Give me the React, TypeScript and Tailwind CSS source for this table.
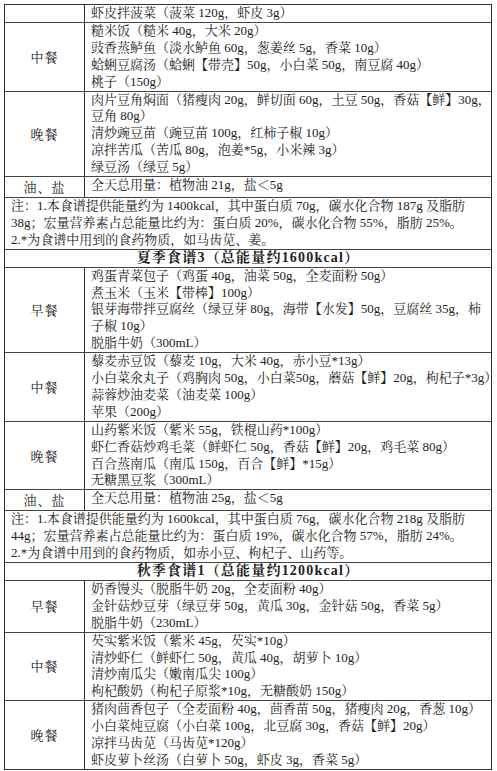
type Row =
  | { kind: 'meal'; label: string; lines: string[] }
  | { kind: 'note'; lines: string[] }
  | { kind: 'title'; text: string };

const rows: Row[] = [
  { kind: 'meal', label: '', lines: ['虾皮拌菠菜（菠菜 120g，虾皮 3g）'] },
  {
    kind: 'meal',
    label: '中餐',
    lines: [
      '糙米饭（糙米 40g，大米 20g）',
      '豉香蒸鲈鱼（淡水鲈鱼 60g，葱姜丝 5g，香菜 10g）',
      '蛤蜊豆腐汤（蛤蜊【带壳】50g，小白菜 50g，南豆腐 40g）',
      '桃子（150g）',
    ],
  },
  {
    kind: 'meal',
    label: '晚餐',
    lines: [
      '肉片豆角焖面（猪瘦肉 20g，鲜切面 60g，土豆 50g，香菇【鲜】30g，',
      '豆角 80g）',
      '清炒豌豆苗（豌豆苗 100g，红柿子椒 10g）',
      '凉拌苦瓜（苦瓜 80g，泡姜*5g，小米辣 3g）',
      '绿豆汤（绿豆 5g）',
    ],
  },
  { kind: 'meal', label: '油、盐', lines: ['全天总用量：植物油 21g，盐＜5g'] },
  {
    kind: 'note',
    lines: [
      '注：1.本食谱提供能量约为 1400kcal，其中蛋白质 70g，碳水化合物 187g 及脂肪',
      '38g；宏量营养素占总能量比约为：蛋白质 20%，碳水化合物 55%，脂肪 25%。',
      '2.*为食谱中用到的食药物质，如马齿苋、姜。',
    ],
  },
  { kind: 'title', text: '夏季食谱3（总能量约1600kcal）' },
  {
    kind: 'meal',
    label: '早餐',
    lines: [
      '鸡蛋青菜包子（鸡蛋 40g，油菜 50g，全麦面粉 50g）',
      '煮玉米（玉米【带棒】100g）',
      '银芽海带拌豆腐丝（绿豆芽 80g，海带【水发】50g，豆腐丝 35g，柿',
      '子椒 10g）',
      '脱脂牛奶（300mL）',
    ],
  },
  {
    kind: 'meal',
    label: '中餐',
    lines: [
      '藜麦赤豆饭（藜麦 10g，大米 40g，赤小豆*13g）',
      '小白菜氽丸子（鸡胸肉 50g，小白菜50g，蘑菇【鲜】20g，枸杞子*3g）',
      '蒜蓉炒油麦菜（油麦菜 100g）',
      '苹果（200g）',
    ],
  },
  {
    kind: 'meal',
    label: '晚餐',
    lines: [
      '山药紫米饭（紫米 55g，铁棍山药*100g）',
      '虾仁香菇炒鸡毛菜（鲜虾仁 50g，香菇【鲜】20g，鸡毛菜 80g）',
      '百合蒸南瓜（南瓜 150g，百合【鲜】*15g）',
      '无糖黑豆浆（300mL）',
    ],
  },
  { kind: 'meal', label: '油、盐', lines: ['全天总用量：植物油 25g，盐＜5g'] },
  {
    kind: 'note',
    lines: [
      '注：1.本食谱提供能量约为 1600kcal，其中蛋白质 76g，碳水化合物 218g 及脂肪',
      '44g；宏量营养素占总能量比约为：蛋白质 19%，碳水化合物 57%，脂肪 24%。',
      '2.*为食谱中用到的食药物质，如赤小豆、枸杞子、山药等。',
    ],
  },
  { kind: 'title', text: '秋季食谱1（总能量约1200kcal）' },
  {
    kind: 'meal',
    label: '早餐',
    lines: [
      '奶香馒头（脱脂牛奶 20g，全麦面粉 40g）',
      '金针菇炒豆芽（绿豆芽 50g，黄瓜 30g，金针菇 50g，香菜 5g）',
      '脱脂牛奶（230mL）',
    ],
  },
  {
    kind: 'meal',
    label: '中餐',
    lines: [
      '芡实紫米饭（紫米 45g，芡实*10g）',
      '清炒虾仁（鲜虾仁 50g，黄瓜 40g，胡萝卜 10g）',
      '清炒南瓜尖（嫩南瓜尖 100g）',
      '枸杞酸奶（枸杞子原浆*10g，无糖酸奶 150g）',
    ],
  },
  {
    kind: 'meal',
    label: '晚餐',
    lines: [
      '猪肉茴香包子（全麦面粉 40g，茴香苗 50g，猪瘦肉 20g，香葱 10g）',
      '小白菜炖豆腐（小白菜 100g，北豆腐 30g，香菇【鲜】20g）',
      '凉拌马齿苋（马齿苋*120g）',
      '虾皮萝卜丝汤（白萝卜 50g，虾皮 3g，香菜 5g）',
    ],
  },
];

function Lines({ lines }: { lines: string[] }) {
  return (
    <>
      {lines.map((line, i) => (
        <div key={i} className="whitespace-nowrap">
          {line}
        </div>
      ))}
    </>
  );
}

export default function App() {
  return (
    <div className="min-h-screen bg-white pl-[4px] pt-[4px] text-[13px] leading-[16.9px] text-[#222] font-['Liberation_Serif','Noto_Serif_CJK_SC','Noto_Sans_CJK_SC',serif]">
      <div className="w-[488px] border border-[#333]">
        {rows.map((row, i) => (
          <div key={i} className={i > 0 ? 'border-t border-[#444]' : ''}>
            {row.kind === 'meal' && (
              <div className="flex">
                <div className="w-[80px] shrink-0 border-r border-[#333] flex items-center justify-center pt-[3px] tracking-[1px]">
                  {row.label}
                </div>
                <div className="flex-1 min-w-0 pl-[6px]">
                  <Lines lines={row.lines} />
                </div>
              </div>
            )}
            {row.kind === 'note' && (
              <div className="pl-[6px]">
                <Lines lines={row.lines} />
              </div>
            )}
            {row.kind === 'title' && (
              <div className="text-center text-[14px] font-bold tracking-[1.2px]">{row.text}</div>
            )}
          </div>
        ))}
      </div>
    </div>
  );
}
